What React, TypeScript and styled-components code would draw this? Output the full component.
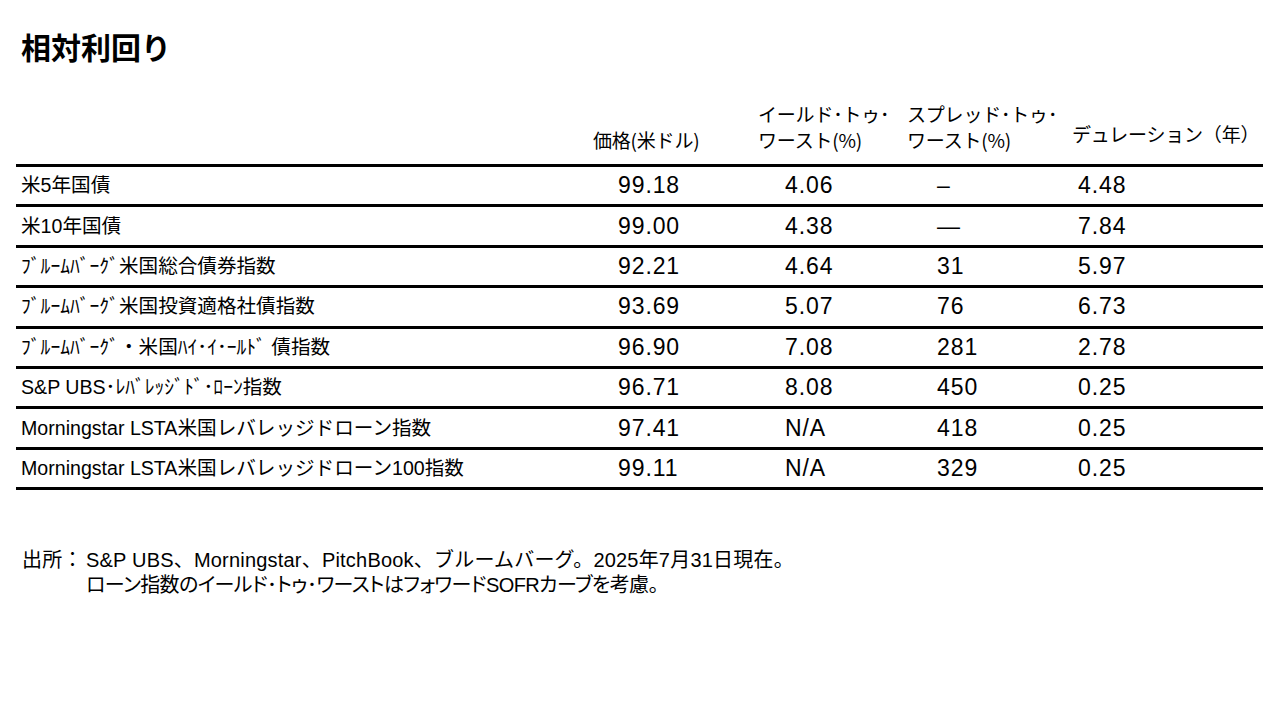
import React from "react";
import styled, { createGlobalStyle } from "styled-components";

const Global = createGlobalStyle`
  html, body { margin: 0; padding: 0; background: #ffffff; }
  body { font-family: "Noto Sans CJK JP", "Noto Sans", sans-serif; color: #000; }
`;

const Page = styled.div`
  width: 1280px;
  height: 720px;
  box-sizing: border-box;
  padding: 25px 17px 0 16px;
  display: flex;
  flex-direction: column;
  overflow: hidden;
`;

const Title = styled.h1`
  margin: 0 0 0 5px;
  font-family: "Noto Sans CJK JP", sans-serif;
  font-weight: 700;
  font-size: 30px;
  line-height: 42px;
  letter-spacing: 0px;
`;

const HeaderGrid = styled.div`
  margin-top: 31px;
  display: grid;
  grid-template-columns: 577px 165px 149px 165px 1fr;
  align-items: end;
  height: 66px;
  box-sizing: border-box;
`;

const HeadCell = styled.div<{ $lift?: number }>`
  font-family: "Noto Sans CJK JP", sans-serif;
  font-size: 19px;
  line-height: 26px;
  white-space: pre-line;
  letter-spacing: -0.2px;
  padding-bottom: ${(p) => 11 + (p.$lift ?? 0)}px;
`;

const Table = styled.div`
  display: flex;
  flex-direction: column;
  border-bottom: 3px solid #000;
`;

const Row = styled.div`
  display: grid;
  grid-template-columns: 602px 167px 152px 141px 1fr;
  align-items: center;
  height: 40.4px;
  box-sizing: border-box;
  border-top: 3px solid #000;
`;

const Label = styled.div`
  padding-left: 5px;
  font-family: "Liberation Sans", "Noto Sans CJK JP", sans-serif;
  font-size: 19.6px;
  line-height: 37px;
  white-space: nowrap;
`;

const Num = styled.div`
  font-family: "Liberation Sans", Arial, sans-serif;
  font-size: 23px;
  line-height: 37px;
  letter-spacing: 0.9px;
  white-space: nowrap;
`;

const Notes = styled.div`
  margin-top: 58px;
  margin-left: 6px;
  display: grid;
  grid-template-columns: 64px 1fr;
  font-family: "Liberation Sans", "Noto Sans CJK JP", sans-serif;
  font-size: 20px;
  line-height: 25px;
  letter-spacing: 0.2px;
`;

const NoteLabel = styled.div`
  white-space: nowrap;
`;

const NoteText = styled.div<{ $tight?: boolean }>`
  white-space: nowrap;
  font-feature-settings: ${(p) => (p.$tight ? '"palt" 1' : "normal")};
  letter-spacing: ${(p) => (p.$tight ? "-0.6px" : "0.2px")};
`;

type RowData = {
  name: string;
  price: string;
  ytw: string;
  stw: string;
  dur: string;
};

const rows: RowData[] = [
  { name: "米5年国債", price: "99.18", ytw: "4.06", stw: "–", dur: "4.48" },
  { name: "米10年国債", price: "99.00", ytw: "4.38", stw: "—", dur: "7.84" },
  { name: "ﾌﾞﾙｰﾑﾊﾞｰｸﾞ米国総合債券指数", price: "92.21", ytw: "4.64", stw: "31", dur: "5.97" },
  { name: "ﾌﾞﾙｰﾑﾊﾞｰｸﾞ米国投資適格社債指数", price: "93.69", ytw: "5.07", stw: "76", dur: "6.73" },
  { name: "ﾌﾞﾙｰﾑﾊﾞｰｸﾞ・米国ﾊｲ･ｲ･ｰﾙﾄﾞ 債指数", price: "96.90", ytw: "7.08", stw: "281", dur: "2.78" },
  { name: "S&P UBS･ﾚﾊﾞﾚｯｼﾞﾄﾞ･ﾛｰﾝ指数", price: "96.71", ytw: "8.08", stw: "450", dur: "0.25" },
  { name: "Morningstar LSTA米国レバレッジドローン指数", price: "97.41", ytw: "N/A", stw: "418", dur: "0.25" },
  { name: "Morningstar LSTA米国レバレッジドローン100指数", price: "99.11", ytw: "N/A", stw: "329", dur: "0.25" },
];

export default function App() {
  return (
    <>
      <Global />
      <Page>
        <Title>相対利回り</Title>
        <HeaderGrid>
          <div />
          <HeadCell>価格(米ドル)</HeadCell>
          <HeadCell>{"イールド･トゥ･\nワースト(%)"}</HeadCell>
          <HeadCell>{"スプレッド･トゥ･\nワースト(%)"}</HeadCell>
          <HeadCell $lift={6}>デュレーション（年）</HeadCell>
        </HeaderGrid>
        <Table>
          {rows.map((r) => (
            <Row key={r.name}>
              <Label>{r.name}</Label>
              <Num>{r.price}</Num>
              <Num>{r.ytw}</Num>
              <Num>{r.stw}</Num>
              <Num>{r.dur}</Num>
            </Row>
          ))}
        </Table>
        <Notes>
          <NoteLabel>出所：</NoteLabel>
          <NoteText>S&amp;P UBS、Morningstar、PitchBook、ブルームバーグ。2025年7月31日現在。</NoteText>
          <div />
          <NoteText $tight>ローン指数のイールド･トゥ･ワーストはフォワードSOFRカーブを考慮。</NoteText>
        </Notes>
      </Page>
    </>
  );
}
